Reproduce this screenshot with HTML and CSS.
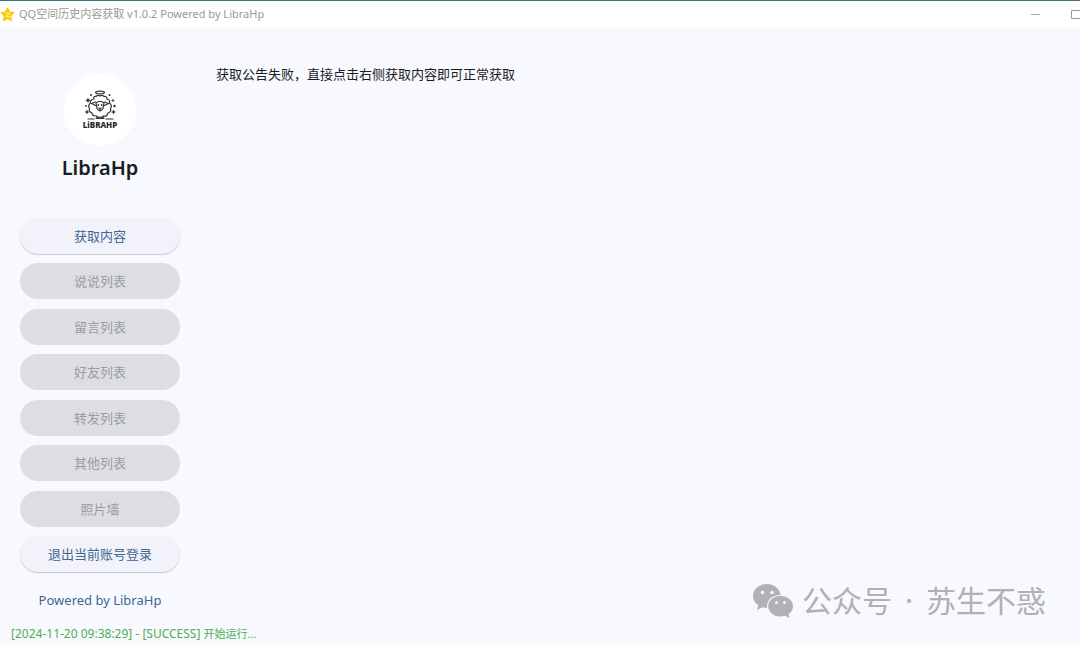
FILE: index.html
```html
<!DOCTYPE html>
<html lang="zh-CN">
<head>
  <meta charset="UTF-8">
  <meta name="viewport" content="width=device-width, initial-scale=1.0">
  <title>QQ空间历史内容获取 v1.0.2 Powered by LibraHp</title>
  <link rel="stylesheet" href="styles.css">
</head>
<body>
  <!-- 标题栏 -->
  <header class="titlebar">
    <svg class="app-icon" viewBox="0 0 16 16" aria-hidden="true">
      <path d="M8 1.2 L10 5.4 L14.8 6 L11.3 9.4 L12.2 14.4 L8 12.1 L3.8 14.4 L4.7 9.4 L1.2 6 L6 5.4 Z" fill="#fdc90c" stroke="#fdc90c" stroke-width="1.4" stroke-linejoin="round"/>
      <path d="M5.5 6.8 Q8 6.2 10.4 6.8 L6.4 9.8 Q9 10.6 11.5 9.8" fill="none" stroke="#fff3b8" stroke-width="1"/>
    </svg>
    <span class="title">QQ空间历史内容获取 v1.0.2 Powered by LibraHp</span>
    <div class="window-controls">
      <button type="button" aria-label="最小化">
        <svg width="9" height="9" viewBox="0 0 9 9"><path d="M0 4.5 H9" stroke="#aaa" stroke-width="1"/></svg>
      </button>
      <button type="button" aria-label="最大化">
        <svg width="9" height="9" viewBox="0 0 9 9"><path d="M10 0.5 H0.5 V8.5 H10" fill="none" stroke="#999" stroke-width="1"/></svg>
      </button>
    </div>
  </header>

  <main class="layout">
    <!-- 侧边栏 -->
    <aside class="sidebar">
      <div class="avatar">
        <svg viewBox="0 0 72 72" role="img" aria-label="LibraHp">
          <g fill="none" stroke="#333" stroke-width="1.2" stroke-linecap="round" stroke-linejoin="round">
            <ellipse cx="36" cy="18.500" rx="4.400" ry="1.300"/>
            <path d="M30 25 Q29 22 32 22.500 Q34 20.500 36 22 Q38.500 20.500 40 22.500 Q43 22 43 25 Q46.500 26 45.500 29 Q48.500 31.500 46.500 34.500 Q47.500 38 44 39 Q43 43 40 42 Q38 44 36 43 Q33 44 32 42 Q28 42 28 39 Q24.500 38 25.500 34.500 Q23.500 31.500 26.500 29 Q25.500 26 30 25 Z"/>
            <path d="M32 29 Q36 25.500 40 29 L39 34.500 Q36 39 33 34.500 Z"/>
            <path d="M31.500 28 L27.500 29.500 L31.500 31.500 M40.500 28 L44.500 29.500 L40.500 31.500"/>
            <path d="M35 34 L36 35 L37 34 M36 35 V37 M33 42 V44.500 M39 42 V44.500 M24 45 H30 M32 44.500 H40 M42 45 H49"/>
          </g>
          <g fill="#333">
            <circle cx="34.300" cy="31" r="0.900"/>
            <circle cx="37.700" cy="31" r="0.900"/>
            <circle cx="27" cy="21" r="1"/>
            <circle cx="45.500" cy="21" r="1"/>
            <circle cx="22" cy="32" r="0.900"/>
            <circle cx="50.500" cy="32" r="1.200"/>
            <path d="M24 23.500 L24.900 25.400 L26.800 26.300 L24.900 27.200 L24 29.100 L23.100 27.200 L21.200 26.300 L23.100 25.400 Z"/>
            <path d="M49 24.500 L49.600 25.900 L51 26.500 L49.600 27.100 L49 28.500 L48.400 27.100 L47 26.500 L48.400 25.900 Z"/>
            <path d="M23 35.500 L23.800 37.200 L25.500 38 L23.800 38.800 L23 40.500 L22.200 38.800 L20.500 38 L22.200 37.200 Z"/>
            <path d="M49.500 35.500 L50.300 37.200 L52 38 L50.300 38.800 L49.500 40.500 L48.700 38.800 L47 38 L48.700 37.200 Z"/>
          </g>
          <text class="avatar-text" x="36" y="54" text-anchor="middle">LiBRAHP</text>
        </svg>
      </div>
      <h1 class="username">LibraHp</h1>

      <nav class="menu">
        <button type="button">获取内容</button>
        <button type="button" disabled>说说列表</button>
        <button type="button" disabled>留言列表</button>
        <button type="button" disabled>好友列表</button>
        <button type="button" disabled>转发列表</button>
        <button type="button" disabled>其他列表</button>
        <button type="button" disabled>照片墙</button>
        <button type="button">退出当前账号登录</button>
      </nav>

      <a class="powered" href="#">Powered by LibraHp</a>
    </aside>

    <!-- 内容区 -->
    <section class="content">
      <p>获取公告失败，直接点击右侧获取内容即可正常获取</p>
    </section>
  </main>

  <!-- 日志 -->
  <footer class="log">[2024-11-20 09:38:29] - [SUCCESS] <span class="log-message">开始运行...</span></footer>

  <!-- 水印 -->
  <div class="watermark">
    <svg width="42" height="36" viewBox="0 0 42 36" aria-hidden="true">
      <path d="M15 1 C7 1 1 6.200 1 13 C1 17 3 20.200 6.300 22.300 L5 27 L10.500 24.200 C12 24.700 13.500 24.900 15.200 24.900 C14 17.500 20 12 28.700 12 C27.500 5.500 22 1 15 1 Z" fill="#b0b0b5"/>
      <path d="M28.500 13 C21.500 13 16.200 17.500 16.200 23.200 C16.200 29 21.500 33.400 28.500 33.400 C30 33.400 31.500 33.200 33 32.700 L37.500 35 L36.500 31 C39.400 29 41 26.300 41 23.200 C41 17.500 35.500 13 28.500 13 Z" fill="#b0b0b5"/>
      <g fill="#f8f9ff">
        <circle cx="10.500" cy="9.500" r="1.800"/>
        <circle cx="20" cy="9.500" r="1.800"/>
        <circle cx="24.500" cy="19.500" r="1.500"/>
        <circle cx="32.500" cy="19.500" r="1.500"/>
      </g>
    </svg>
    <span>公众号</span>
    <span class="dot">·</span>
    <span>苏生不惑</span>
  </div>
</body>
</html>
```
FILE: styles.css
```css
:root {
  --bg: #f8f9ff;
  --text: #191c20;
  --primary: #3f6691;
  --disabled-bg: #dddee3;
  --disabled-text: #9b9ca1;
  --font-family: "Noto Sans", "Noto Sans CJK SC", sans-serif;
}
* {
  box-sizing: border-box;
  margin: 0;
  padding: 0;
}
body {
  position: relative;
  min-height: 100vh;
  display: flex;
  flex-direction: column;
  font-family: var(--font-family);
  font-size: 13px;
  line-height: 20px;
  color: var(--text);
  background: var(--bg);
}
button {
  font: inherit;
  border: none;
  cursor: pointer;
}
/* 标题栏 */
.titlebar {
  display: flex;
  align-items: center;
  gap: 4px;
  height: 28px;
  padding-bottom: 1px;
  background: #fff;
  border-top: 1px solid #3c7478;
}
.app-icon {
  width: 15px;
  height: 15px;
}
.title {
  font-size: 11px;
  color: #999;
}
.window-controls {
  display: flex;
  gap: 31px;
  margin-left: auto;
}
.window-controls button {
  display: flex;
  background: none;
}
/* 主体 */
.layout {
  flex: 1;
  display: flex;
}
.sidebar {
  display: flex;
  flex-direction: column;
  align-items: center;
  width: 200px;
  padding: 46px 20px 14px;
}
.avatar {
  width: 72px;
  height: 72px;
  border-radius: 50%;
  background: #fff;
}
.avatar svg {
  display: block;
}
.avatar-text {
  font-family: "Noto Sans", sans-serif;
  font-size: 8px;
  font-weight: 800;
  fill: #222;
}
.username {
  margin: 8px 0 36px;
  font-size: 20px;
  line-height: 28px;
  font-weight: 600;
}
.menu {
  flex: 1;
  display: flex;
  flex-direction: column;
  justify-content: space-between;
  gap: 8px;
  width: 100%;
}
.menu button {
  height: 36px;
  border-radius: 18px;
  color: var(--primary);
  background: #f2f3fa;
  box-shadow: 0 1px 1px rgba(0, 0, 0, 0.2);
}
.menu button:disabled {
  color: var(--disabled-text);
  background: var(--disabled-bg);
  box-shadow: none;
  cursor: default;
}
.powered {
  margin-top: 18px;
  color: var(--primary);
  text-decoration: none;
}
.content {
  flex: 1;
  padding: 36px 16px;
}
/* 日志 */
.log {
  padding: 0 11px 1px;
  font-size: 12px;
  color: #4caf50;
}
.log-message {
  font-size: 11px;
}
/* 水印 */
.watermark {
  position: absolute;
  right: 34px;
  bottom: 24px;
  display: flex;
  align-items: center;
  gap: 8px;
  font-size: 30px;
  line-height: 40px;
  color: #b0b0b5;
}
.dot {
  margin: 0 5px;
}
```
